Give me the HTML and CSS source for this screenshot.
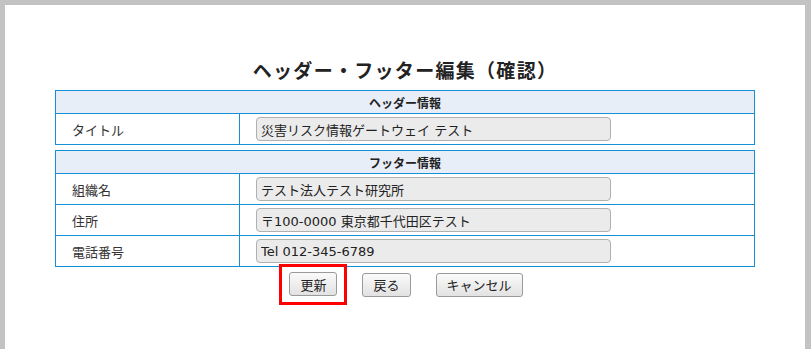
FILE: index.html
```html
<!DOCTYPE html>
<html lang="ja">
  <head>
    <meta charset="UTF-8" />
    <title>ヘッダー・フッター編集（確認）</title>
    <link rel="stylesheet" href="styles.css">
  </head>

  <body>
    <div class="page">
      <h2 class="page-title">ヘッダー・フッター編集（確認）</h2>

      <table class="info-table">
        <tr>
          <th colspan="2">ヘッダー情報</th>
        </tr>
        <tr>
          <td class="label">タイトル</td>
          <td class="value"><input type="text" value="災害リスク情報ゲートウェイ テスト" readonly /></td>
        </tr>
      </table>

      <table class="info-table">
        <tr>
          <th colspan="2">フッター情報</th>
        </tr>
        <tr>
          <td class="label">組織名</td>
          <td class="value"><input type="text" value="テスト法人テスト研究所" readonly /></td>
        </tr>
        <tr>
          <td class="label">住所</td>
          <td class="value"><input type="text" value="〒100-0000 東京都千代田区テスト" readonly /></td>
        </tr>
        <tr>
          <td class="label">電話番号</td>
          <td class="value"><input type="text" value="Tel 012-345-6789" readonly /></td>
        </tr>
      </table>

      <div class="actions">
        <span class="highlight"><button class="btn">更新</button></span>
        <button class="btn">戻る</button>
        <button class="btn">キャンセル</button>
      </div>
    </div>
  </body>
</html>
```

FILE: styles.css
```css
* {
  box-sizing: border-box;
  margin: 0;
  padding: 0;
}

html,
body {
  height: 100%;
}

body {
  font-family: 'DejaVu Sans', 'Noto Sans CJK JP', sans-serif;
  background: #c3c3c3;
  color: #222;
  padding: 5px 6px 0 5px;
  overflow: hidden;
}

.page {
  background: #fff;
  height: 100%;
  padding-top: 52px;
}

.page-title {
  font-family: 'Noto Sans CJK JP', sans-serif;
  text-align: center;
  font-size: 19px;
  font-weight: 700;
  line-height: 26px;
  margin-bottom: 7px;
  color: #222;
  letter-spacing: 1.3px;
}

.info-table {
  width: 700px;
  margin: 0 auto 5px;
  border-collapse: collapse;
  border: 1px solid #1590d4;
}

.info-table th {
  background: #e8eef8;
  height: 23px;
  font-family: 'Noto Sans CJK JP', sans-serif;
  font-size: 12px;
  font-weight: 700;
  color: #222;
  border: 1px solid #1590d4;
}

.info-table td {
  border: 1px solid #1590d4;
  height: 31px;
  font-size: 13px;
  color: #333;
}

.info-table td.label {
  width: 184px;
  padding-left: 16px;
}

.info-table td.value {
  padding-left: 16px;
}

.info-table input {
  width: 355px;
  height: 24px;
  background: #ebebeb;
  border: 1px solid #b0b0b0;
  border-radius: 4px;
  padding: 0 4px;
  font-family: 'DejaVu Sans', 'Noto Sans CJK JP', sans-serif;
  font-size: 13px;
  color: #222;
  display: block;
}

.actions {
  display: flex;
  justify-content: center;
  align-items: center;
  gap: 15px;
  margin-top: -8px;
  padding-right: 8px;
}

.highlight {
  border: 3px solid #f00;
  padding: 5px 7px 6px;
  display: inline-block;
}

.btn {
  display: block;
  height: 24px;
  padding: 0 10px;
  background: linear-gradient(#fafafa, #e2e2e2);
  border: 1px solid #9a9a9a;
  border-radius: 3px;
  font-family: 'DejaVu Sans', 'Noto Sans CJK JP', sans-serif;
  font-size: 13px;
  color: #222;
}

.actions .btn + .btn {
  margin-left: 10px;
}
```
